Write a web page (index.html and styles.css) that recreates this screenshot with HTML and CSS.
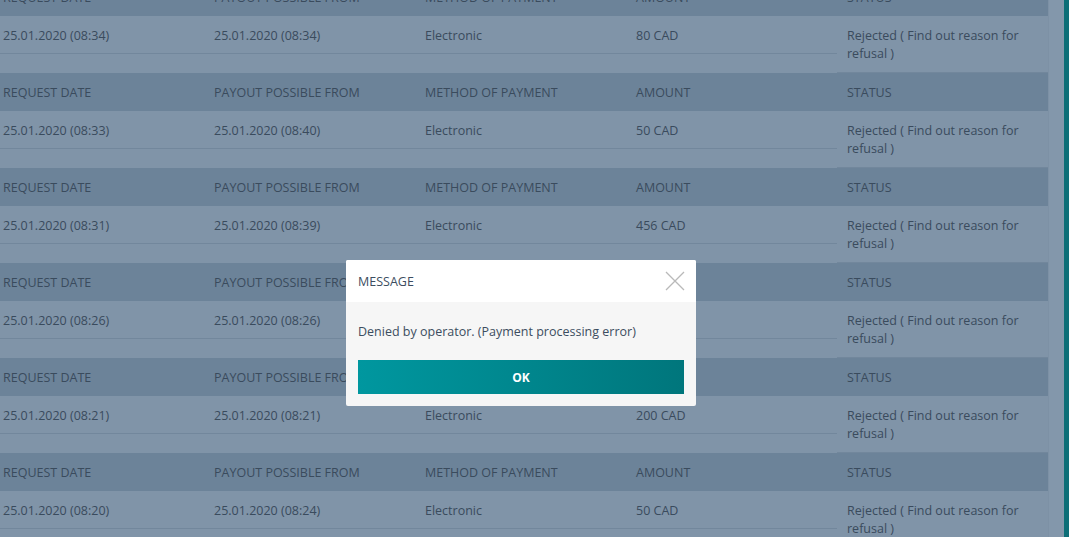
FILE: index.html
```html
<!DOCTYPE html>
<html lang="en">
<head>
    <meta charset="UTF-8">
    <meta name="viewport" content="width=device-width, initial-scale=1.0">
    <title>Payout requests</title>
    <link rel="stylesheet" href="styles.css">
</head>
<body>
    <div class="layout">
        <div class="history">
            <div class="request">
                <div class="row head"><div>REQUEST DATE</div><div>PAYOUT POSSIBLE FROM</div><div>METHOD OF PAYMENT</div><div>AMOUNT</div><div>STATUS</div></div>
                <div class="row data"><div>25.01.2020 (08:34)</div><div>25.01.2020 (08:34)</div><div>Electronic</div><div>80 CAD</div><div class="status">Rejected ( Find out reason for refusal )</div></div>
            </div>
            <div class="request">
                <div class="row head"><div>REQUEST DATE</div><div>PAYOUT POSSIBLE FROM</div><div>METHOD OF PAYMENT</div><div>AMOUNT</div><div>STATUS</div></div>
                <div class="row data"><div>25.01.2020 (08:33)</div><div>25.01.2020 (08:40)</div><div>Electronic</div><div>50 CAD</div><div class="status">Rejected ( Find out reason for refusal )</div></div>
            </div>
            <div class="request">
                <div class="row head"><div>REQUEST DATE</div><div>PAYOUT POSSIBLE FROM</div><div>METHOD OF PAYMENT</div><div>AMOUNT</div><div>STATUS</div></div>
                <div class="row data"><div>25.01.2020 (08:31)</div><div>25.01.2020 (08:39)</div><div>Electronic</div><div>456 CAD</div><div class="status">Rejected ( Find out reason for refusal )</div></div>
            </div>
            <div class="request">
                <div class="row head"><div>REQUEST DATE</div><div>PAYOUT POSSIBLE FROM</div><div>METHOD OF PAYMENT</div><div>AMOUNT</div><div>STATUS</div></div>
                <div class="row data"><div>25.01.2020 (08:26)</div><div>25.01.2020 (08:26)</div><div>Electronic</div><div>100 CAD</div><div class="status">Rejected ( Find out reason for refusal )</div></div>
            </div>
            <div class="request">
                <div class="row head"><div>REQUEST DATE</div><div>PAYOUT POSSIBLE FROM</div><div>METHOD OF PAYMENT</div><div>AMOUNT</div><div>STATUS</div></div>
                <div class="row data"><div>25.01.2020 (08:21)</div><div>25.01.2020 (08:21)</div><div>Electronic</div><div>200 CAD</div><div class="status">Rejected ( Find out reason for refusal )</div></div>
            </div>
            <div class="request">
                <div class="row head"><div>REQUEST DATE</div><div>PAYOUT POSSIBLE FROM</div><div>METHOD OF PAYMENT</div><div>AMOUNT</div><div>STATUS</div></div>
                <div class="row data"><div>25.01.2020 (08:20)</div><div>25.01.2020 (08:24)</div><div>Electronic</div><div>50 CAD</div><div class="status">Rejected ( Find out reason for refusal )</div></div>
            </div>
        </div>
        <div class="scrollbar"></div>
        <div class="edge"></div>
    </div>

    <div class="modal">
        <div class="modal-head">
            <span>MESSAGE</span>
            <svg class="close" width="20" height="20" viewBox="0 0 20 20">
                <path d="M1 1 L19 19 M19 1 L1 19" stroke="#b9b9b9" stroke-width="1.3" fill="none"/>
            </svg>
        </div>
        <div class="modal-body">
            <p>Denied by operator. (Payment processing error)</p>
            <button class="ok">OK</button>
        </div>
    </div>
</body>
</html>
```

FILE: styles.css
```css
body {
    margin: 0;
    padding: 0;
    font-family: "Open Sans", Arial, sans-serif;
    font-size: 12.5px;
    color: #3a4b5d;
    background-color: #8397ab;
    overflow: hidden;
    height: 537px;
}
.layout {
    display: flex;
    height: 537px;
    overflow: hidden;
}
.history {
    width: 1055px;
    margin-left: -7px;
    margin-top: -22px;
    flex-shrink: 0;
}
.row {
    display: grid;
    grid-template-columns: repeat(5, 211px);
}
.row > div {
    padding-left: 10px;
    box-sizing: border-box;
}
.head {
    background-color: #6c8399;
    height: 38px;
    align-items: center;
}
.data {
    background-color: #8094a8;
    height: 57px;
    align-items: start;
}
.data > div {
    height: 38px;
    line-height: 18px;
    padding-top: 11px;
    border-bottom: 1px solid #72879c;
}
.data > .status {
    height: 57px;
    padding-right: 20px;
}
.scrollbar {
    width: 16px;
    flex-shrink: 0;
    background-color: #8397ab;
    border-left: 1px solid #7d91a5;
    box-sizing: border-box;
}
.edge {
    flex: 1;
    background-color: #0d6e77;
}
.modal {
    position: absolute;
    top: 260px;
    left: 346px;
    width: 350px;
    background-color: #f6f6f6;
    border-radius: 2px;
    overflow: hidden;
}
.modal-head {
    display: flex;
    justify-content: space-between;
    align-items: center;
    height: 42px;
    padding: 0 11px 0 12px;
    background-color: #fff;
    color: #3c4d60;
}
.modal-body {
    padding: 21px 12px 12px;
}
.modal-body p {
    margin: 0 0 20px;
    color: #3c4d60;
}
.ok {
    display: block;
    width: 100%;
    height: 34px;
    border: none;
    background: linear-gradient(90deg, #00979f, #00767c);
    color: #fff;
    font-family: "Open Sans", Arial, sans-serif;
    font-weight: bold;
    font-size: 12px;
    cursor: pointer;
}
```
